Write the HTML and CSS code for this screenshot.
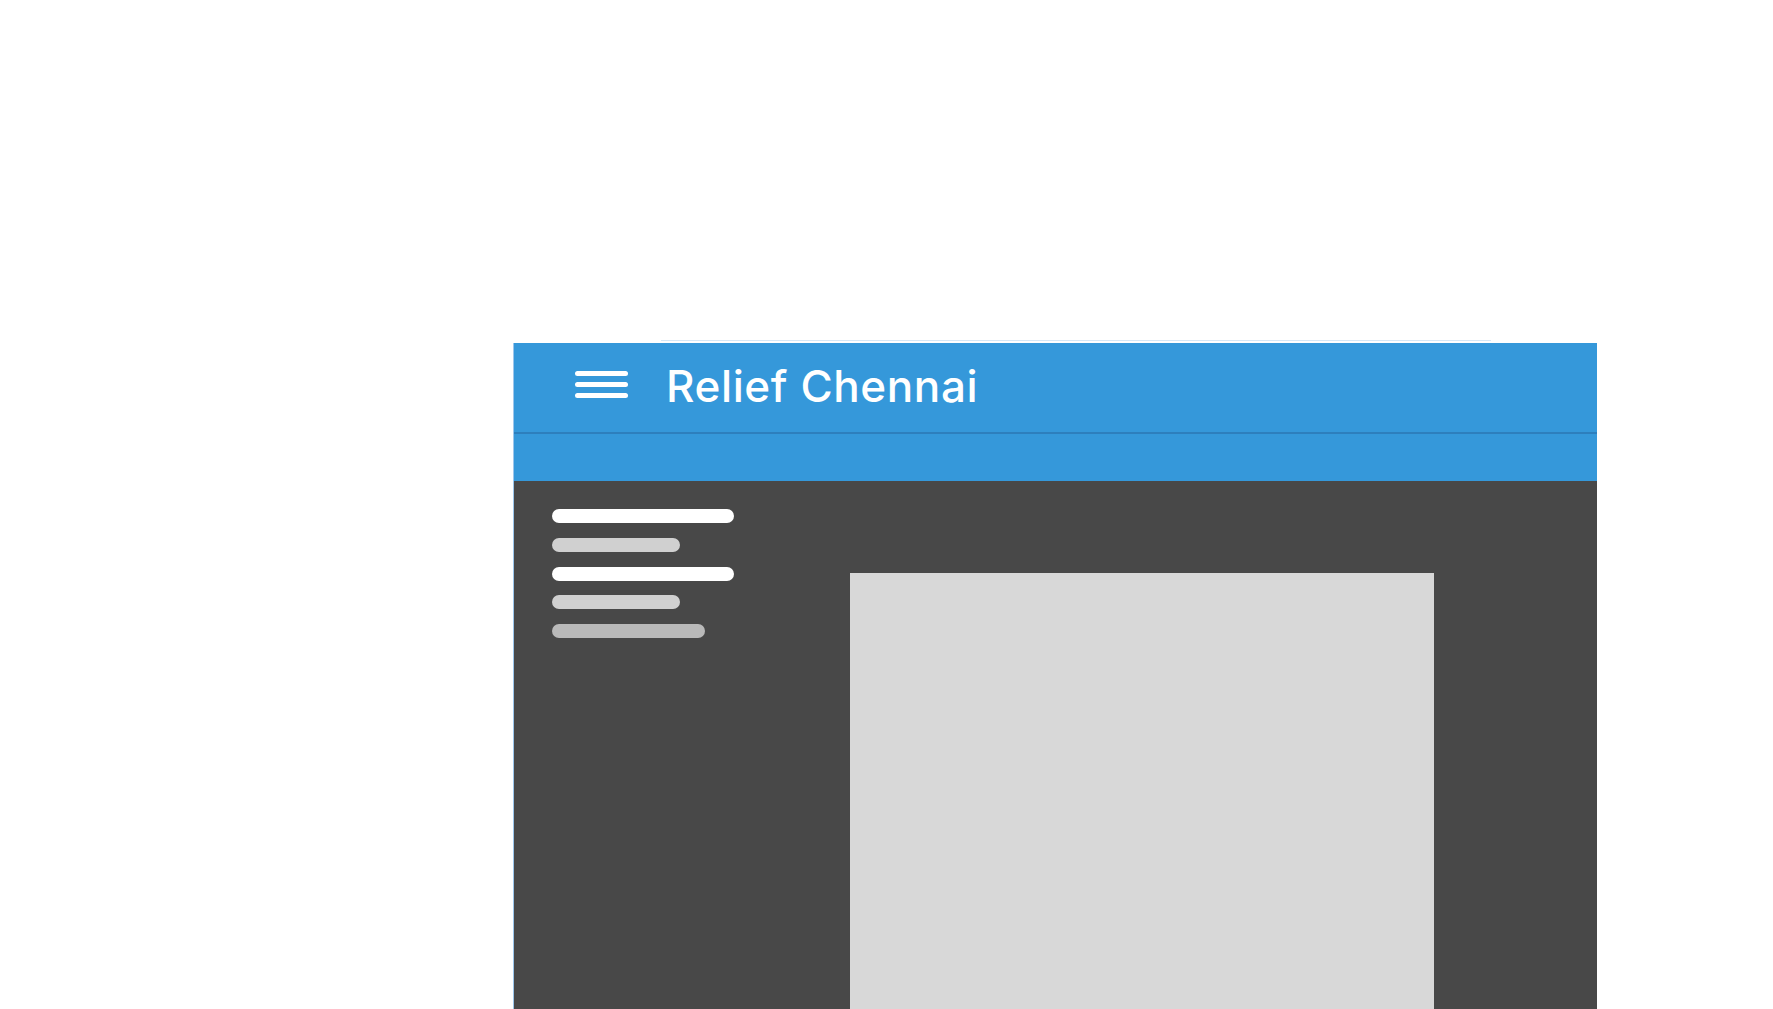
FILE: index.html
```html
<!DOCTYPE html>
<html>
<head>
<meta charset="utf-8">
<link rel="stylesheet" href="styles.css">
</head>
<body>
<div class="topline"></div>
<div class="frame">
  <header class="appbar">
    <div class="menu"><span></span><span></span><span></span></div>
    <h1 class="title">Relief Chennai</h1>
  </header>
  <div class="divider"></div>
  <div class="subbar"></div>
  <main class="content">
    <nav class="sidebar">
      <div class="bar bar-white bar-long"></div>
      <div class="bar bar-light bar-short"></div>
      <div class="bar bar-white bar-long"></div>
      <div class="bar bar-light bar-short"></div>
      <div class="bar bar-mid bar-medium"></div>
    </nav>
    <section class="panel"></section>
  </main>
</div>
</body>
</html>
```
FILE: styles.css
```css
html, body {
  margin: 0;
  padding: 0;
  background: #ffffff;
  overflow: hidden;
  height: 1009px;
}
.topline {
  margin: 340px 0 0 661px;
  width: 830px;
  height: 1px;
  background: #d6e7f6;
}
.frame {
  margin: 2px 0 0 513px;
  width: 1084px;
  border-left: 1px solid #9cc6ec;
  box-sizing: border-box;
}
.appbar {
  height: 89px;
  background: #3598da;
  display: flex;
  align-items: center;
  padding-left: 61px;
  box-sizing: border-box;
}
.menu {
  display: flex;
  flex-direction: column;
  gap: 6px;
  margin-bottom: 7px;
}
.menu span {
  display: block;
  width: 53px;
  height: 5px;
  border-radius: 3px;
  background: #ffffff;
}
.title {
  margin: 0 0 3px 38px;
  font-family: Inter, "Noto Sans", sans-serif;
  font-weight: 500;
  font-size: 44px;
  color: #ffffff;
  letter-spacing: 0.6px;
  line-height: 1;
}
.divider {
  height: 2px;
  background: #2d7fbd;
}
.subbar {
  height: 47px;
  background: #3598da;
}
.content {
  background: #484848;
  height: 528px;
  display: flex;
  align-items: flex-start;
}
.sidebar {
  padding: 28px 0 0 38px;
  display: flex;
  flex-direction: column;
  gap: 14.75px;
  width: 298px;
}
.bar {
  height: 14px;
  border-radius: 7px;
}
.bar-white { background: #ffffff; }
.bar-light { background: #d0d0d0; }
.bar-mid { background: #b9b9b9; }
.bar-long { width: 182px; }
.bar-short { width: 128px; }
.bar-medium { width: 153px; }
.panel {
  margin-top: 92px;
  width: 584px;
  height: 436px;
  background: #d8d8d8;
}
```
